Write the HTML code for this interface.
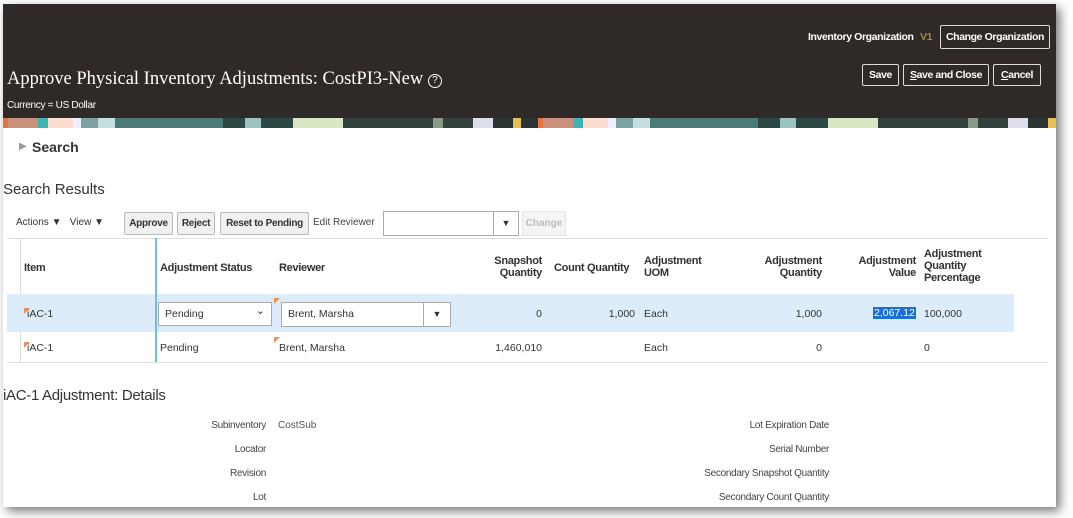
<!DOCTYPE html>
<html><head><meta charset="utf-8"><style>
*{margin:0;padding:0;box-sizing:border-box}
body{width:1073px;height:518px;background:#fff;font-family:"Liberation Sans",Arial,sans-serif;position:relative;overflow:hidden;color:#333}
.shadow{position:absolute;left:3px;top:4px;width:1053px;height:503px;box-shadow:4px 4px 10px rgba(0,0,0,.55);background:#fff}
.a{position:absolute;white-space:nowrap}
.hdr{position:absolute;left:3px;top:4px;width:1053px;height:114px;background:#2f2a27}
.ban{position:absolute;left:3px;top:118px;width:1053px;height:10px;background:linear-gradient(90deg,#e8743b 0 5px,#c9907a 5px 35px,#3fb3b3 35px 45px,#fcdcd0 45px 70px,#eef 70px 78px,#7ba3a3 78px 95px,#c4dfe0 95px 112px,#4a7b78 112px 220px,#2c4845 220px 242px,#9bc3c0 242px 258px,#2c4845 258px 290px,#d9e6c2 290px 340px,#33413f 340px 430px,#8b9a86 430px 440px,#33413f 440px 470px,#dde 470px 490px,#2a3432 490px 510px,#e8c050 510px 518px,#2a3432 518px 535px);background-size:535px 10px}
.b{position:absolute;border:1px solid #ddd;border-radius:2px;color:#fff;font-size:10.5px;font-weight:bold;height:22px;line-height:20px;text-align:center;letter-spacing:-0.4px;white-space:nowrap}
.tb{position:absolute;border:1px solid #b9b9b9;border-radius:2px;background:#eef0f2;font-size:10px;font-weight:bold;height:23px;line-height:21px;text-align:center;color:#333;letter-spacing:-0.3px;white-space:nowrap}
.th{font-size:11px;font-weight:bold;color:#333;line-height:12px;letter-spacing:-0.3px}
.td{font-size:10.5px;color:#333}
.lbl{font-size:10px;color:#444;text-align:right;letter-spacing:-0.3px}
.flag{position:absolute;width:0;height:0;border-top:6px solid #e8925a;border-right:6px solid transparent}
</style></head><body>
<div class="shadow"></div>
<div class="hdr"></div>
<div class="ban"></div>
<div class="a" style="left:808px;top:31px;font-size:10.5px;font-weight:bold;color:#fff;letter-spacing:-0.4px">Inventory Organization <span style="color:#a08a4a;margin-left:4px">V1</span></div>
<div class="b" style="left:940px;top:25px;width:110px;height:24px;line-height:22px">Change Organization</div>
<div class="b" style="left:862px;top:64px;width:37px">Save</div>
<div class="b" style="left:903px;top:64px;width:86px"><u>S</u>ave and Close</div>
<div class="b" style="left:993px;top:64px;width:48px"><u>C</u>ancel</div>
<div class="a" style="left:7px;top:69px;font-family:'Liberation Serif',serif;font-size:18.5px;color:#fff">Approve Physical Inventory Adjustments: CostPI3-New <span style="display:inline-block;width:14px;height:14px;border:1.3px solid #fff;border-radius:50%;font-family:'Liberation Sans';font-size:10px;text-align:center;line-height:12px;vertical-align:1px">?</span></div>
<div class="a" style="left:7px;top:100px;font-size:10px;color:#fff;letter-spacing:-0.3px">Currency = US Dollar</div>

<div class="a" style="left:19px;top:141px;font-size:10px;color:#999">&#9654;</div>
<div class="a" style="left:32px;top:139px;font-size:14px;font-weight:bold;color:#333">Search</div>
<div class="a" style="left:3px;top:181px;font-size:15px;color:#333">Search Results</div>

<div class="a" style="left:16px;top:217px;font-size:10px;color:#333">Actions &#9660;&nbsp;&nbsp; View &#9660;</div>
<div class="tb" style="left:124px;top:212px;width:49px">Approve</div>
<div class="tb" style="left:177px;top:212px;width:38px">Reject</div>
<div class="tb" style="left:220px;top:212px;width:89px">Reset to Pending</div>
<div class="a" style="left:313px;top:217px;font-size:10px;color:#444">Edit Reviewer</div>
<div class="a" style="left:383px;top:211px;width:111px;height:25px;border:1px solid #aaa;background:#fff"></div>
<div class="a" style="left:493px;top:211px;width:26px;height:25px;border:1px solid #aaa;background:#fff;font-size:9px;text-align:center;line-height:23px">&#9660;</div>
<div class="a" style="left:522px;top:211px;width:44px;height:25px;border:1px solid #e5e5e5;background:#f4f5f6;font-size:10px;color:#bbb;text-align:center;line-height:23px;font-weight:bold">Change</div>

<div class="a" style="left:7px;top:238px;width:1040px;border-top:1px solid #ddd"></div>
<div class="a" style="left:20px;top:238px;height:124px;border-left:1px solid #ddd"></div>
<div class="a" style="left:7px;top:294px;width:1007px;height:38px;background:#dcecfa"></div>
<div class="a" style="left:155px;top:238px;height:124px;border-left:2px solid #6fbfdc"></div>
<div class="a" style="left:7px;top:362px;width:1040px;border-top:1px solid #ddd"></div>

<div class="a th" style="left:24px;top:262px">Item</div>
<div class="a th" style="left:160px;top:262px">Adjustment Status</div>
<div class="a th" style="left:279px;top:262px">Reviewer</div>
<div class="a th" style="left:480px;top:255px;width:62px;text-align:right">Snapshot<br>Quantity</div>
<div class="a th" style="left:554px;top:262px">Count Quantity</div>
<div class="a th" style="left:644px;top:255px">Adjustment<br>UOM</div>
<div class="a th" style="left:740px;top:255px;width:82px;text-align:right">Adjustment<br>Quantity</div>
<div class="a th" style="left:840px;top:255px;width:76px;text-align:right">Adjustment<br>Value</div>
<div class="a th" style="left:924px;top:248px">Adjustment<br>Quantity<br>Percentage</div>

<div class="flag" style="left:24px;top:308px"></div>
<div class="a td" style="left:27px;top:308px">iAC-1</div>
<div class="a" style="left:158px;top:302px;width:114px;height:24px;border:1px solid #aaa;background:#fff;font-size:10.5px;line-height:22px;padding-left:6px">Pending<span style="position:absolute;right:6px;top:-3px;font-size:11px">&#8964;</span></div>
<div class="flag" style="left:274px;top:298px"></div>
<div class="a" style="left:281px;top:302px;width:143px;height:25px;border:1px solid #aaa;background:#fff;font-size:10.5px;line-height:23px;padding-left:6px">Brent, Marsha</div>
<div class="a" style="left:423px;top:302px;width:28px;height:25px;border:1px solid #aaa;background:#fff;font-size:9px;text-align:center;line-height:23px">&#9660;</div>
<div class="a td" style="left:480px;top:308px;width:62px;text-align:right">0</div>
<div class="a td" style="left:570px;top:308px;width:65px;text-align:right">1,000</div>
<div class="a td" style="left:644px;top:308px">Each</div>
<div class="a td" style="left:740px;top:308px;width:82px;text-align:right">1,000</div>
<div class="a td" style="left:873px;top:307px;background:#1a6fd0;color:#fff;padding:0 1px">2,067.12</div>
<div class="a td" style="left:924px;top:308px">100,000</div>

<div class="flag" style="left:24px;top:342px"></div>
<div class="a td" style="left:27px;top:342px">iAC-1</div>
<div class="a td" style="left:160px;top:342px">Pending</div>
<div class="flag" style="left:274px;top:337px"></div>
<div class="a td" style="left:279px;top:342px">Brent, Marsha</div>
<div class="a td" style="left:470px;top:342px;width:72px;text-align:right">1,460,010</div>
<div class="a td" style="left:644px;top:342px">Each</div>
<div class="a td" style="left:740px;top:342px;width:82px;text-align:right">0</div>
<div class="a td" style="left:924px;top:342px">0</div>

<div class="a" style="left:3px;top:387px;font-size:15px;color:#333;letter-spacing:-0.3px">iAC-1 Adjustment: Details</div>
<div class="a lbl" style="left:100px;top:420px;width:166px">Subinventory</div>
<div class="a" style="left:278px;top:420px;font-size:10px;color:#555">CostSub</div>
<div class="a lbl" style="left:100px;top:444px;width:166px">Locator</div>
<div class="a lbl" style="left:100px;top:468px;width:166px">Revision</div>
<div class="a lbl" style="left:100px;top:492px;width:166px">Lot</div>
<div class="a lbl" style="left:600px;top:420px;width:229px">Lot Expiration Date</div>
<div class="a lbl" style="left:600px;top:444px;width:229px">Serial Number</div>
<div class="a lbl" style="left:600px;top:468px;width:229px">Secondary Snapshot Quantity</div>
<div class="a lbl" style="left:600px;top:492px;width:229px">Secondary Count Quantity</div>
</body></html>
